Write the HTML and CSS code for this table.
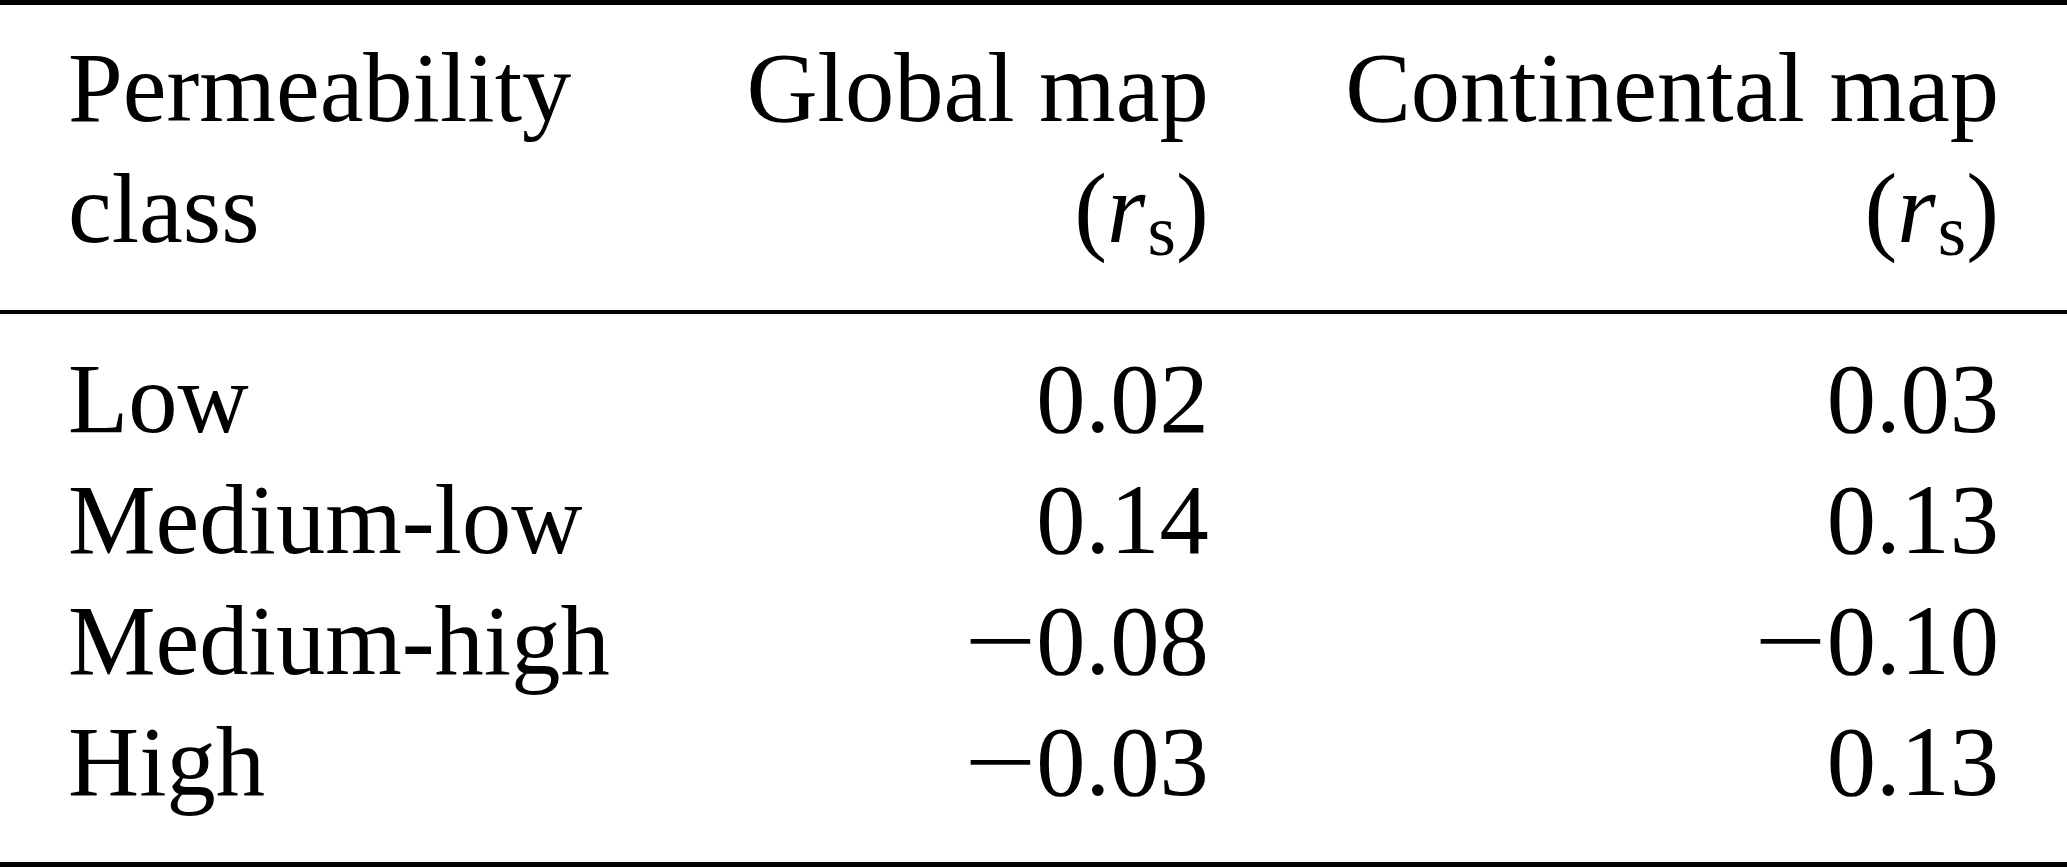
FILE: index.html
```html
<!DOCTYPE html>
<html lang="en">

<head>
    <meta charset="UTF-8">
    <meta name="viewport" content="width=device-width, initial-scale=1.0">
    <title>Permeability class</title>
    <link rel="stylesheet" href="styles.css">
</head>

<body>
    <table class="results">
        <thead>
            <tr>
                <th class="label">Permeability<br>class</th>
                <th class="num">Global map<br>(<i>r</i><span class="sub">s</span>)</th>
                <th class="num">Continental map<br>(<i>r</i><span class="sub">s</span>)</th>
            </tr>
        </thead>
        <tbody>
            <tr>
                <td class="label">Low</td>
                <td class="num">0.02</td>
                <td class="num">0.03</td>
            </tr>
            <tr>
                <td class="label">Medium-low</td>
                <td class="num">0.14</td>
                <td class="num">0.13</td>
            </tr>
            <tr>
                <td class="label">Medium-high</td>
                <td class="num"><span class="minus">&minus;</span>0.08</td>
                <td class="num"><span class="minus">&minus;</span>0.10</td>
            </tr>
            <tr>
                <td class="label">High</td>
                <td class="num"><span class="minus">&minus;</span>0.03</td>
                <td class="num">0.13</td>
            </tr>
        </tbody>
    </table>
</body>

</html>
```

FILE: styles.css
```css
body {
    margin: 0;
    background: #fff;
    color: #000;
    font-family: "Liberation Serif", "Times New Roman", serif;
}

.results {
    width: 100%;
    border-collapse: separate;
    border-spacing: 0;
    font-size: 98.5px;
    line-height: 121px;
}

.results th,
.results td {
    padding: 0 68px;
    font-weight: normal;
    vertical-align: top;
    white-space: nowrap;
}

.results th {
    border-top: 5px solid #000;
    border-bottom: 4px solid #000;
    padding-top: 22px;
    padding-bottom: 41px;
}

.results tbody tr:first-child td {
    padding-top: 24px;
}

.results tbody tr:last-child td {
    padding-bottom: 40px;
    border-bottom: 5px solid #000;
}

.label {
    text-align: left;
}

.num {
    text-align: right;
}

.sub {
    margin-left: 0.03em;
    font-size: 0.74em;
    line-height: 0;
    vertical-align: -0.18em;
}

.minus {
    display: inline-block;
    transform: scaleX(1.3);
    transform-origin: right center;
}
```
